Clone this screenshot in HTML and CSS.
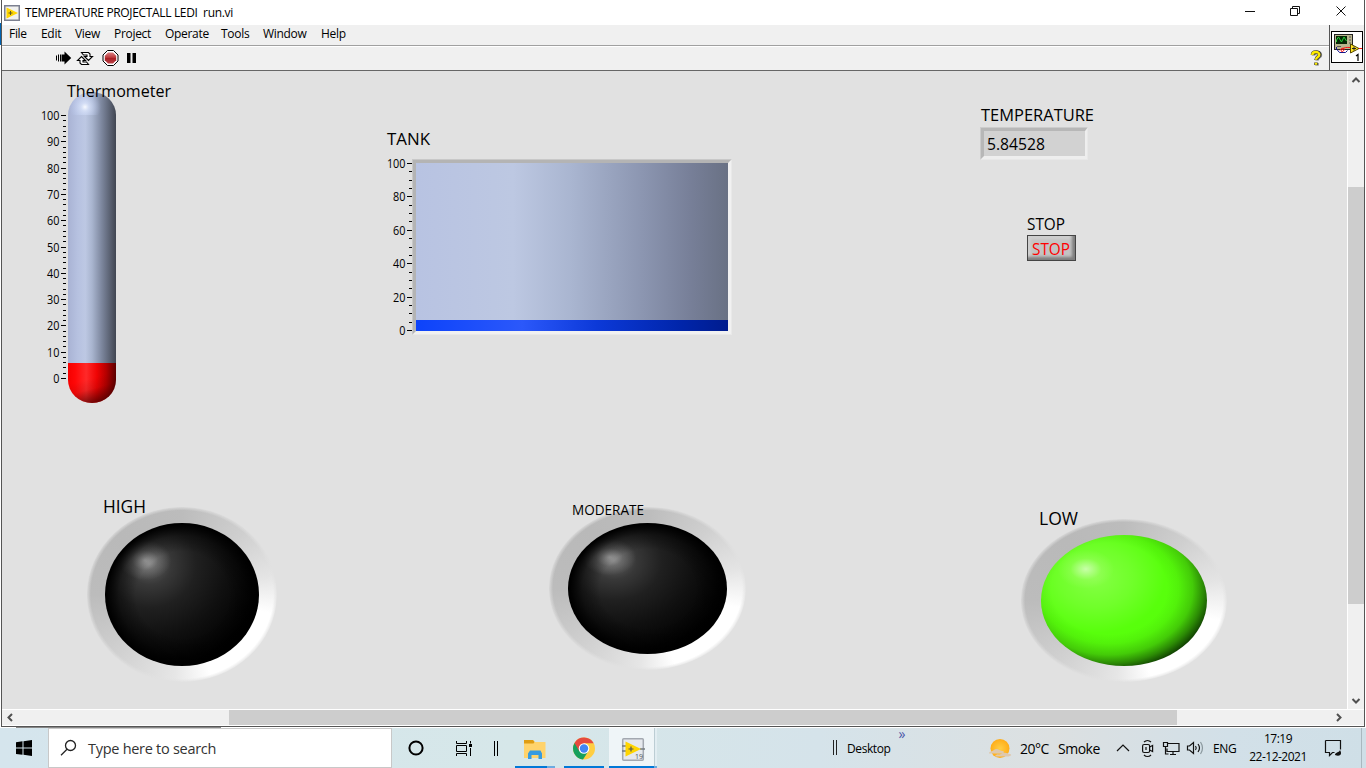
FILE: index.html
```html
<!DOCTYPE html>
<html lang="en">
<head>
<meta charset="utf-8">
<title>TEMPERATURE PROJECTALL LEDI run.vi</title>
<link rel="stylesheet" href="styles.css">
</head>
<body>
<div class="desktop">
  <main class="window">
    <header class="titlebar">
      <svg class="app-icon" width="16" height="16" viewBox="0 0 16 16"><rect x=".75" y=".75" width="14.5" height="14.5" fill="#f1f1ee" stroke="#7c8090" stroke-width="1.5"/><path d="M2.500 2.500 14 8 2.500 13.500z" fill="#ffd500"/><path d="M6.500 6v4M4.500 8h4" stroke="#605a20"/></svg>
      <h1 class="title">TEMPERATURE PROJECTALL LEDI&nbsp; run.vi</h1>
      <svg class="win-buttons" width="116" height="25" viewBox="1240 0 116 25" fill="none" stroke="#111"><path d="M1245 11.500h10M1290.500 8.500h7v7h-7zM1292.500 8v-1.500h7v7h-2M1336.500 6.500l9 9M1345.500 6.500l-9 9"/></svg>
    </header>
    <div class="bars">
      <div class="bars-main">
        <nav class="menu"><span>File</span><span>Edit</span><span>View</span><span>Project</span><span>Operate</span><span>Tools</span><span>Window</span><span>Help</span></nav>
        <div class="toolbar">
          <svg width="90" height="18" viewBox="54 49 90 18">
            <path d="M56.500 55.500v5M58.500 54.500v7M60.500 54.500v7" stroke="#000"/><path d="M61.500 54.500H64.500V51.500L71.200 58l-6.700 6.500v-3h-3z"/>
            <g fill="#fff" stroke="#000" stroke-width="1.100"><path d="M81.500 52.500h7l1.500 1.500v2.500h2.500l-4 4-4-4h2.500v-1.500h-3.500z"/><path d="M88.500 64.500h-7L80 63v-2.500h-2.500l4-4 4 4H83V62h3.500z"/></g>
            <path d="m107.500 50.500h6l4.500 4.500v6l-4.500 4.500h-6L103 61v-6z" fill="#fff" stroke="#000"/><path d="M108 52.500h5l3.200 3.200v4.600L113 63.500h-5l-3.200-3.200v-4.600z" fill="url(#abort)"/>
            <path d="M127 53h3.500v10H127zM132.500 53h3.500v10h-3.500z"/>
            <defs><linearGradient id="abort" x2="0" y2="1"><stop stop-color="#d98082"/><stop offset=".45" stop-color="#bd3a3d"/><stop offset=".5" stop-color="#a81d22"/><stop offset="1" stop-color="#b94348"/></linearGradient></defs>
          </svg>
          <svg class="help" width="14" height="17" viewBox="1310 49 14 17" fill="none"><path d="M1313.500 54.500c0-4 7-4 7-.5 0 2.500-3.500 2-3.500 5.500M1317 62v2.500" stroke="#777" stroke-width="3.400"/><path d="M1312.500 54c0-4 7-4 7-.5 0 2.500-3.500 2-3.500 5.500M1316 61.500v2.500" stroke="#333" stroke-width="3.600"/><path d="M1312.300 54c0-4 7-4 7-.3 0 2.500-3.300 2-3.300 5M1316 61.800v2" stroke="#ffed00" stroke-width="2.400"/></svg>
        </div>
      </div>
      <div class="vi-icon">
        <svg width="32" height="32" viewBox="0 0 32 32"><rect x=".5" y=".5" width="31" height="31" fill="#fff" stroke="#000"/><rect x="3.500" y="3.500" width="18" height="15" fill="#b9b58e" stroke="#222"/><rect x="5" y="5" width="11" height="8" fill="#052705"/><path d="M5.500 11V9l2-3 3 5 2.500-5 2.500 4" fill="none" stroke="#25d339"/><path d="M18 6h2M18 9h2M18 12h2M6 15.500h4" stroke="#555"/><path d="M5.500 16v2l3 3.500h6l2-2" fill="none" stroke="#15158c"/><path d="M9 19.500c1-3 5-3 4-.5s-4 2-2-.5 5-2 8-2M27 17.500h4" fill="none" stroke="#f11"/><path d="M19.500 13 28 17.500l-8.500 4.500z" fill="#ffe320" stroke="#554800"/><path d="M21 17.500h4M23 15.500v4" stroke="#222"/><path d="M25 25l2-1.500V30" fill="none" stroke="#000" stroke-width="1.200"/></svg>
      </div>
    </div>
    <div class="workspace">
      <section class="panel">
        <div class="led led-high"><div class="lens dark"></div></div>
        <div class="led led-moderate"><div class="lens dark"></div></div>
        <div class="led led-low"><div class="lens green"></div></div>
        <div class="tank"><div class="tank-fill"></div></div>
        <div class="readout"></div>
        <div class="stop-button"></div>
        <svg class="overlay" width="1345" height="638" viewBox="2 71 1345 638">
          <defs>
            <clipPath id="tube"><rect x="68" y="92" width="48" height="311" rx="24" ry="23"/></clipPath>
            <linearGradient id="glass"><stop stop-color="#a9b3d4"/><stop offset=".2" stop-color="#b6c1e0"/><stop offset=".36" stop-color="#bdc8e3"/><stop offset=".5" stop-color="#a9b5cf"/><stop offset=".7" stop-color="#7d879e"/><stop offset="1" stop-color="#414652"/></linearGradient>
            <linearGradient id="fluid"><stop stop-color="#f50000"/><stop offset=".15" stop-color="#ff0808"/><stop offset=".38" stop-color="#ff2929"/><stop offset=".6" stop-color="#f00404"/><stop offset=".8" stop-color="#b30000"/><stop offset="1" stop-color="#5c0000"/></linearGradient>
            <radialGradient id="cap" gradientUnits="userSpaceOnUse" cx="85" cy="107" r="16"><stop stop-color="#f8faff"/><stop offset=".25" stop-color="#d8e2f9" stop-opacity=".8"/><stop offset="1" stop-color="#b9c8f0" stop-opacity="0"/></radialGradient>
            <linearGradient id="bowl" gradientUnits="userSpaceOnUse" x1="88" y1="379" x2="95" y2="404"><stop stop-color="#400000" stop-opacity="0"/><stop offset=".4" stop-color="#400000" stop-opacity=".12"/><stop offset="1" stop-color="#400000" stop-opacity=".8"/></linearGradient>
          </defs>
          <g clip-path="url(#tube)"><path d="M68 92h48v271H68z" fill="url(#glass)"/><path d="M68 92h48v23H68z" fill="url(#cap)"/><path d="M68 363h48v40H68z" fill="url(#fluid)"/><path d="M68 372h48v31H68z" fill="url(#bowl)"/></g>
          <g id="scales"></g>
          <g class="label">
            <text x="67" y="97" font-size="16.300" textLength="104" lengthAdjust="spacingAndGlyphs">Thermometer</text>
            <text x="387" y="145" font-size="16" textLength="43" lengthAdjust="spacingAndGlyphs">TANK</text>
            <text x="981" y="121" font-size="16" textLength="113" lengthAdjust="spacingAndGlyphs">TEMPERATURE</text>
            <text x="987" y="150" font-size="16" textLength="58" lengthAdjust="spacingAndGlyphs">5.84528</text>
            <text x="1027" y="230" font-size="15.500" textLength="38" lengthAdjust="spacingAndGlyphs">STOP</text>
            <text x="1032" y="255" font-size="15.500" textLength="38" lengthAdjust="spacingAndGlyphs" class="red">STOP</text>
            <text x="103" y="513" font-size="17.500" textLength="43" lengthAdjust="spacingAndGlyphs">HIGH</text>
            <text x="572" y="515" font-size="14" textLength="72" lengthAdjust="spacingAndGlyphs">MODERATE</text>
            <text x="1039" y="525" font-size="17.500" textLength="39" lengthAdjust="spacingAndGlyphs">LOW</text>
          </g>
        </svg>
      </section>
      <div class="vscroll"><svg width="16" height="116" viewBox="0 0 16 116"><path d="M4.500 11 8 7.500l3.500 3.500"/></svg><div class="vthumb"></div><svg width="16" height="16" viewBox="0 0 16 16"><path d="M4.500 6 8 9.500 11.500 6"/></svg></div>
    </div>
    <div class="hscroll"><svg width="227" height="15" viewBox="0 0 227 15"><path d="M10 4 6.500 7.500 10 11"/></svg><div class="hthumb"></div><svg width="169" height="15" viewBox="0 0 169 15"><path d="M160 4 163.500 7.500 160 11"/></svg></div>
  </main>
  <div class="behind"></div>
  <footer class="taskbar">
    <div class="start"><svg width="16" height="16" viewBox="0 0 16 16"><path d="M0 2.300 6.500 1.300V7.600H0zM7.500 1.200 16 0v7.600H7.500zM0 8.500h6.500v6.300L0 13.900zM7.500 8.500H16V16l-8.500-1.200z"/></svg></div>
    <div class="search"><svg width="18" height="18" viewBox="0 0 18 18" fill="none" stroke="#222" stroke-width="1.300"><circle cx="10.500" cy="6.500" r="5"/><path d="M7 10.200 1 16.200"/></svg><span>Type here to search</span></div>
    <div class="apps">
      <svg width="268" height="40" viewBox="392 728 268 40">
        <circle cx="416" cy="748" r="6.600" fill="none" stroke="#000" stroke-width="2"/>
        <path d="M456.500 741v2.500h10V741M456.500 756v-2.500h10v2.500M456.500 745.500h10v6h-10zM470.500 741v2.500M470.500 748v8" fill="none" stroke="#000"/><path d="M469 744h3v3h-3z"/>
        <path d="M494.500 741v15M497.500 741v15" stroke="#000"/>
        <path d="M609 728h45v40h-45z" fill="#eff5f8"/><path d="M654 728h1v40h-1z" fill="#bccdd4"/><path d="M655 728h2v40h-2z" fill="#e2edf2"/>
        <path d="M524 740h9l2 2h10.500v16H524z" fill="#ffd36b"/><path d="M524 740h9l1.500 2-1 1.500H524z" fill="#df9d14"/><path d="M528 759v-5.500l2-3h10.500l1.500 3v5.500h-3.500v-4h-7v4z" fill="#369be0"/>
        <circle cx="584" cy="748.500" r="11" fill="#ffce42"/><path d="M574.500 743A11 11 0 0 0 583 759.500l5.500-8.500-4.500-2.500z" fill="#16a05d"/><path d="M574.500 743a11 11 0 0 1 19.200.3H584v5.200l-4.700 2.700z" fill="#e64a3e"/><circle cx="584" cy="748.500" r="5.300" fill="#fff"/><circle cx="584" cy="748.500" r="4.200" fill="#4285f4"/>
        <rect x="622.700" y="738.700" width="20.600" height="21.600" rx="1" fill="#e6e9ee" stroke="#a3a8b0" stroke-width="1.500"/><path d="M622 746h5M622 751h5M640 749h5" stroke="#747b80" stroke-width="1.500"/><path d="M625.500 741.500 641 749l-15.500 7.500z" fill="#ffd500"/><path d="M631 746.500v5M628.500 749h5" stroke="#555" stroke-width="1.200"/><text x="635" y="758.700" class="badge">19</text>
        <path d="M515 766h32v2h-32zM564 766h40v2h-40zM609 766h45v2h-45z" fill="#0078d7"/><path d="M547 766h8v2h-8zM654 766h3v2h-3z" fill="#6cabe0"/>
      </svg>
    </div>
    <div class="tool"><svg width="8" height="16" viewBox="0 0 8 16"><path d="M1.500 0v15M4.500 0v15" stroke="#222"/></svg><span>Desktop</span><b>»</b></div>
    <div class="weather"><svg width="23" height="21" viewBox="990 738 23 21"><defs><radialGradient id="sun"><stop stop-color="#ffce45"/><stop offset="1" stop-color="#ffad19"/></radialGradient></defs><circle cx="1001" cy="748.500" r="9.500" fill="url(#sun)"/><path d="M990 753.500c0-2.500 3-1.500 5-3.500 3-2.500 6 1 8 1 3 0 2 2.500 0 2.500zM996 756c2-2.500 4-1 6-2 4-2.500 6-1 9 0s0 2.500-3 2.500h-10c-2 0-2-.5-2-.5z" fill="#dec8ae"/></svg><span class="degree">20°C</span><span class="smoke">Smoke</span></div>
    <div class="tray"><svg width="92" height="22" viewBox="1114 737 92 22" fill="none" stroke="#111" stroke-width="1.200"><path d="m1117 751 6-6 6 6"/><rect x="1142.600" y="744.500" width="7" height="8" rx="1.500"/><path d="m1149.600 747 3-1.500v6l-3-1.500M1144 742c2-2 5-2 7 0M1144 755c2 2 5 2 7 0M1146 747v3"/><path d="M1167 743.500h12v8h-12v-3M1170 754.500h6M1173 752v2M1163.500 742.500h4v4h-4zM1165.500 747v7h3M1187.500 746h2l4-3.500v11l-4-3.500h-2zM1195.500 746q1.500 2 0 4M1198 744q3 4 0 8"/><path d="M1200.500 742q4 6 0 12" stroke="#8a979d"/></svg><span>ENG</span></div>
    <div class="clock"><span>17:19</span><span class="date">22-12-2021</span></div>
    <svg class="notice" width="18" height="18" viewBox="1324 739 18 18"><path d="M1325.500 740.500h15v9M1325.500 740.500v12h4v3l3-3h2" fill="none" stroke="#111" stroke-width="1.200"/><path d="M1335 755c0-3 4-2 5-5 3 5-1 7-5 5z" fill="#111"/></svg>
    <div class="show-desktop"></div>
  </footer>
</div>
<script src="scales.js"></script>
</body>
</html>
```

FILE: styles.css
```css
* { box-sizing: border-box; }
body { margin: 0; overflow: hidden; background: #fff; color: #000; font: 12px "Open Sans", "Noto Sans", sans-serif; }
svg { display: block; flex: none; }
.desktop { display: flex; flex-direction: column; width: 1366px; height: 768px; background: linear-gradient(90deg, transparent 2px, #fff 2px), linear-gradient(#fff 0 23px, #0063b1 23px 45px, #fff 45px); }
.window { display: flex; flex-direction: column; width: 1364px; height: 727px; margin-left: 1px; border: solid #555; border-width: 0 1px 1px; background: #f0f0f0; }
.titlebar { display: flex; align-items: center; height: 25px; padding: 0 8px 0 2px; background: #fff; }
.title { margin: 0 0 0 5px; font-size: 12px; font-weight: 400; letter-spacing: -.34px; white-space: nowrap; }
.win-buttons { margin-left: auto; }
.bars { display: flex; height: 46px; border-bottom: 1px solid #666; }
.bars-main { flex: 1; border-right: 1px solid #555; }
.menu { display: grid; grid-template-columns: 32px 34px 39px 51px 56px 42px 58px 40px; height: 21px; padding: 0 0 3px 7px; align-items: center; border-bottom: 1px solid #a0a0a0; letter-spacing: -.3px; }
.toolbar { display: flex; align-items: center; height: 24px; padding: 0 5px 1px 52px; border-top: 1px solid #fff; }
.help { margin-left: auto; }
.vi-icon { width: 34px; padding: 6px 1px 0; }
.workspace { display: flex; height: 638px; }
.panel { position: relative; width: 1345px; background: #e1e1e1; }
.overlay { position: absolute; left: 0; top: 0; }
.label, .scale-text { font-family: "Open Sans", "Noto Sans", sans-serif; }
.scale-text { font-size: 12px; }
.red { fill: #f00; }

.led { position: absolute; border-radius: 50%; display: grid; place-items: center; background: radial-gradient(closest-side, transparent 96%, rgba(225,225,225,.8) 100%), conic-gradient(#bcbcbc 0deg, #cfcfcf 45deg, #e4e4e4 78deg, #fff 102deg 160deg, #e6e6e6 185deg, #d2d2d2 225deg, #bcbcbc 270deg, #b9b9b9 315deg, #bcbcbc 360deg); }
.led-high { left: 85px; top: 436px; width: 190px; height: 175px; }
.led-moderate { left: 547px; top: 436px; width: 197px; height: 163px; }
.led-low { left: 1019px; top: 448px; width: 206px; height: 163px; }
.lens { border-radius: 50%; }
.led-high .lens { width: 154px; height: 143px; }
.led-moderate .lens { width: 159px; height: 131px; }
.dark { background:
  radial-gradient(closest-side, transparent 60%, rgba(0,0,0,.4) 82%, #000 98%),
  radial-gradient(ellipse 17% 14% at 26% 26%, rgba(205,205,205,.65), rgba(160,160,160,.28) 50%, transparent),
  radial-gradient(ellipse at 29% 29%, #626262 0, #383838 14%, #202020 30%, #101010 50%, #000 75%); }
.green { width: 166px; height: 131px; background:
  radial-gradient(ellipse 17% 15% at 27% 26%, rgba(225,255,205,.75), rgba(180,255,130,.25) 55%, transparent),
  radial-gradient(ellipse 60% 60% at 41% 41%, transparent 58%, rgba(0,20,0,.06) 70%, rgba(0,20,0,.22) 84%, rgba(0,20,0,.5) 95%, rgba(0,20,0,.86) 106%),
  radial-gradient(ellipse 80% 80% at 33% 33%, #85ff45 0, #70ff2a 28%, #58ff0c 52%, #55ff08); }

.tank { position: absolute; left: 410px; top: 88px; width: 320px; height: 176px; border: solid; border-width: 4px; border-color: #b4b4b4 #f1f1f1 #f1f1f1 #b4b4b4; background: linear-gradient(90deg, #b8c3e2, #bdc8e2 31%, #a9b5d0 50%, #8b95b0 73%, #777f98 88%, #697184); display: flex; align-items: flex-end; outline: 1px solid rgba(225,225,225,.45); outline-offset: -1px; }
.tank-fill { width: 100%; height: 11px; background: linear-gradient(90deg, #0d43fa, #2b58fa 34%, #0c39d8 58%, #0025aa 85%, #001c8e); }
.readout { position: absolute; left: 978px; top: 56px; width: 108px; height: 33px; background: #d2d2d2; border: solid; border-width: 4px 3px 4px 4px; border-color: #b7b7b7 #eee #eee #b7b7b7; outline: 1px solid rgba(225,225,225,.5); outline-offset: -1px; }
.stop-button { position: absolute; left: 1025px; top: 164px; width: 49px; height: 26px; border: 1px solid #444; background: #c3c3c3; box-shadow: inset -3px -3px 3px #7d7d7d, inset 3px 3px 3px #cfcfcf; }

.vscroll { display: flex; flex-direction: column; justify-content: space-between; width: 17px; border-left: 1px solid #fff; background: #f0f0f0; }
.vthumb { height: 417px; margin-bottom: auto; background: #cdcdcd; }
.vscroll path, .hscroll path { fill: none; stroke: #505050; stroke-width: 2; }
.hscroll { display: flex; height: 17px; border: solid #fff; border-width: 1px 0; }
.hthumb { width: 948px; background: #cdcdcd; }
.behind { height: 1px; background: linear-gradient(90deg, #fff 16px, #888 16px 221px, #fff 221px); }

.taskbar { display: flex; align-items: center; height: 40px; background: linear-gradient(90deg, #d5e5ed, #d6e7e9 38%, #d5e3ea 60%, #dce0e1 77%, #d2e0e8 90%, #cfdfe7); }
.start { width: 48px; padding-left: 16px; }
.search { display: flex; align-items: center; width: 344px; height: 40px; padding-left: 11px; border: 1px solid #c8c8c8; background: #fff; color: #333; font-size: 14.5px; letter-spacing: -.28px; }
.search span { margin-left: 10px; }
.badge { font: 7px "Open Sans", sans-serif; fill: #555; }
.tool { display: flex; align-items: center; width: 329px; padding-left: 172px; letter-spacing: -.4px; }
.tool span { margin-left: 7px; }
.tool b { margin: -30px 0 0 8px; font-size: 14px; font-weight: 400; color: #4b57a8; }
.weather { display: flex; align-items: center; width: 125px; font-size: 14px; }
.degree { width: 38px; margin-left: 8px; letter-spacing: -.5px; }
.smoke { letter-spacing: -.5px; }
.tray { display: flex; align-items: center; width: 135px; }
.tray span { margin-left: 7px; letter-spacing: -.4px; }
.clock { display: flex; flex-direction: column; align-items: center; gap: 3px; width: 58px; line-height: 15px; padding-bottom: 2px; letter-spacing: -.5px; white-space: nowrap; }
.notice { margin-left: 17px; }
.show-desktop { width: 1px; height: 40px; margin-left: 19px; background: #a9b8bf; }
```

FILE: scales.js
```js
const scales = document.getElementById('scales');

// Draws a vertical axis from 100 (top) to 0 (bottom), with minor ticks between labels.
function drawScale(right, top, bottom, step, minors) {
  const count = (100 / step) * minors;
  let out = '';
  for (let i = 0; i <= count; i++) {
    const y = Math.round(top + (bottom - top) * i / count);
    const major = i % minors === 0;
    const width = major ? 5 : 3;
    out += `<rect x="${right - width}" y="${y}" width="${width}" height="1"/>`;
    if (major) {
      const value = String(100 - step * i / minors);
      const length = value.length * 6.2;
      out += `<text class="scale-text" x="${right - 6.5 - length}" y="${y + 5}" textLength="${length}" lengthAdjust="spacingAndGlyphs">${value}</text>`;
    }
  }
  return out;
}

scales.innerHTML = drawScale(66, 115, 378, 10, 5) + drawScale(412, 163, 330, 20, 4);
```
